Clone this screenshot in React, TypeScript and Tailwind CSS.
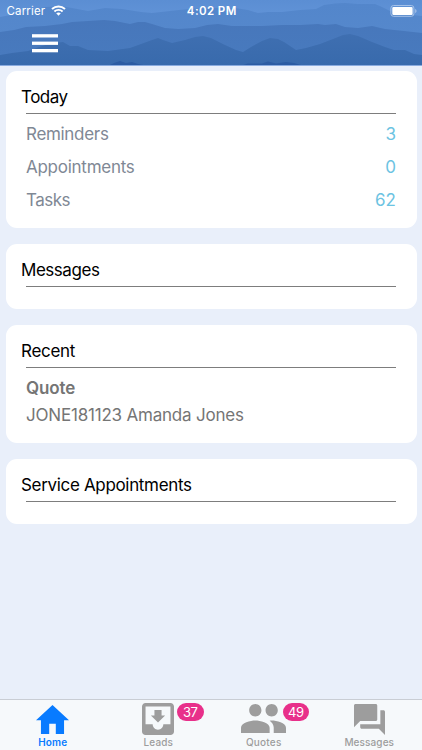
import React from 'react';

interface Tab {
  id: string;
  label: string;
  labelClass: string;
  iconClass: string;
  viewBox: string;
  path: string;
  badge?: number;
}

const todayRows = [
  { label: 'Reminders', count: 3, labelClass: 'tracking-[-0.31px]' },
  { label: 'Appointments', count: 0, labelClass: 'tracking-[-0.26px]' },
  { label: 'Tasks', count: 62, labelClass: 'tracking-[-0.5px]' },
];

const tabs: Tab[] = [
  {
    id: 'home',
    label: 'Home',
    labelClass: 'font-semibold tracking-[0.1px]',
    iconClass: 'mt-[5px] w-[33px] h-[29px]',
    viewBox: '2 3 20 17',
    path: 'M10 20v-6h4v6h5v-8h3L12 3 2 12h3v8z',
  },
  {
    id: 'leads',
    label: 'Leads',
    labelClass: 'font-medium tracking-[0.1px]',
    iconClass: 'mt-[3px] w-[32px] h-[32px]',
    viewBox: '3 3 18 18',
    path: 'M19 3H4.99c-1.11 0-1.98.9-1.98 2L3 19c0 1.1.88 2 1.99 2H19c1.1 0 2-.9 2-2V5c0-1.1-.9-2-2-2zm0 12h-4c0 1.66-1.35 3-3 3s-3-1.34-3-3H4.99V5H19v10zm-3-5h-2V7h-4v3H8l4 4 4-4z',
    badge: 37,
  },
  {
    id: 'quotes',
    label: 'Quotes',
    labelClass: 'font-medium tracking-[0.2px]',
    iconClass: 'mt-[4px] w-[45px] h-[29px]',
    viewBox: '1 5 22 14',
    path: 'M16 11c1.66 0 2.99-1.34 2.99-3S17.66 5 16 5c-1.66 0-3 1.34-3 3s1.34 3 3 3zm-8 0c1.66 0 2.99-1.34 2.99-3S9.66 5 8 5C6.34 5 5 6.34 5 8s1.34 3 3 3zm0 2c-2.33 0-7 1.17-7 3.5V19h14v-2.5c0-2.33-4.67-3.5-7-3.5zm8 0c-.29 0-.62.02-.97.05 1.16.84 1.97 1.97 1.97 3.45V19h6v-2.5c0-2.33-4.67-3.5-7-3.5z',
    badge: 49,
  },
  {
    id: 'messages',
    label: 'Messages',
    labelClass: 'font-medium tracking-[0.1px]',
    iconClass: 'mt-[4px] w-[31px] h-[31px]',
    viewBox: '2 2 20 20',
    path: 'M21 6h-2v9H6v2c0 .55.45 1 1 1h11l4 4V7c0-.55-.45-1-1-1zm-4 6V3c0-.55-.45-1-1-1H3c-.55 0-1 .45-1 1v14l4-4h10c.55 0 1-.45 1-1z',
  },
];

const Mountains: React.FC = () => (
  <svg className="absolute inset-0 w-full h-full" viewBox="0 0 422 66" preserveAspectRatio="none">
    <defs>
      <linearGradient id="sky" x1="0" y1="0" x2="0" y2="20" gradientUnits="userSpaceOnUse">
        <stop offset="0" stopColor="#5b8ed3" />
        <stop offset="1" stopColor="#6294d8" />
      </linearGradient>
      <linearGradient id="far" x1="0" y1="3" x2="0" y2="34" gradientUnits="userSpaceOnUse">
        <stop offset="0" stopColor="#5386cb" />
        <stop offset="1" stopColor="#5588cc" />
      </linearGradient>
      <linearGradient id="mid" x1="0" y1="20" x2="0" y2="56" gradientUnits="userSpaceOnUse">
        <stop offset="0" stopColor="#4777bb" />
        <stop offset="1" stopColor="#487abe" />
      </linearGradient>
      <linearGradient id="near" x1="0" y1="34" x2="0" y2="66" gradientUnits="userSpaceOnUse">
        <stop offset="0" stopColor="#3f6fb1" />
        <stop offset="1" stopColor="#386aac" />
      </linearGradient>
    </defs>
    <rect width="422" height="66" fill="url(#sky)" />
    <path
      d="M0 17L16 14 30 10 46 7 60 6 72 8 88 11 105 8 122 9 141 12 152 13 170 11 188 9 210 8 235 8 248 10 258 13 268 12 282 12 300 10 316 9 324 5 335 3.5 345 3 358 4 375 4 382 7 390 11 402 14 422 16V66H0z"
      fill="url(#far)"
    />
    <path
      d="M0 32L14 30 26 27 45 26 62 24 72 22 88 21 104 20 115 21 130 24 138 22 145 22 152 24 165 28 178 29 195 28 207 25 218 24 232 26 262 26 282 25 300 25 318 24 325 25 336 24 345 27 358 28 372 26 385 29 404 31 422 33V66H0z"
      fill="url(#mid)"
    />
    <path
      d="M0 55L12 53 28 51 42 46 54 43 63 42 70 46 78 46 88 50 108 51 130 48 141 44 152 40 158 38 163 40 172 43 185 40 195 37 203 36 211 38 225 45 236 50 243 52 251 47 262 41 270 38 278 39 284 42 290 46 296 50 306 48 320 44 333 39 343 35 350 34 358 36 372 42 385 47 394 50 405 50 414 54 422 55V66H0z"
      fill="url(#near)"
    />
    <path
      d="M108 66L114 63 120 61 126 63 132 62 138 64 148 66zM240 66L248 63.5 262 63.5 268 61.5 276 63.5 286 62 294 63 304 66z"
      fill="#2c5ca3"
    />
    <rect y="65" width="422" height="1" fill="#8aabdf" />
  </svg>
);

const StatusBar: React.FC = () => (
  <div className="relative flex items-center h-5 pt-[2px] text-[11.5px] leading-5 text-white">
    <div className="flex flex-1 items-center pl-[6.5px]">
      <span className="tracking-[0.15px]">Carrier</span>
      <svg className="ml-[6px] -mt-px w-[15px] h-[11px]" viewBox="0 0 15 11" fill="none">
        <path d="M1 4C4.7.5 10.3.5 14 4" stroke="#fff" strokeWidth="2" />
        <path d="M3.4 6.5c2.3-2.2 5.9-2.2 8.2 0" stroke="#fff" strokeWidth="1.9" />
        <path d="M5.2 8.3c1.3-1.2 3.3-1.2 4.6 0L7.5 10.7z" fill="#fff" />
      </svg>
    </div>
    <span className="font-semibold tracking-[0.4px]">4:02 PM</span>
    <div className="flex flex-1 justify-end pr-[5px]">
      <svg className="w-[27px] h-[12px] -mt-px" viewBox="0 0 27 12" fill="none">
        <rect x="0.9" y="0.5" width="23" height="10.8" rx="2.6" stroke="#a5c1e8" />
        <rect x="2.3" y="1.9" width="20.3" height="8" rx="1.2" fill="#fff" />
        <path d="M25.2 4v4c.8-.3 1.3-1.1 1.3-2s-.5-1.7-1.3-2z" fill="#a5c1e8" />
      </svg>
    </div>
  </div>
);

const Card: React.FC<{
  title: string;
  className: string;
  titleClass: string;
  children?: React.ReactNode;
}> = ({ title, className, titleClass, children }) => (
  <section className={`rounded-[11px] bg-white pt-[15px] px-[15.5px] ${className}`}>
    <h2 className={`text-[17px] leading-[22px] text-black ${titleClass}`}>{title}</h2>
    <div className="mx-[5px] mt-[5px] h-px bg-[#7d7d7d]" />
    <div className="px-[5px]">{children}</div>
  </section>
);

const TabBar: React.FC = () => (
  <nav className="grid grid-cols-4 h-[51px] border-t border-[#c9cdd4] bg-[#f6f9fb]">
    {tabs.map((tab) => {
      const isActive = tab.id === 'home';

      return (
        <button
          key={tab.id}
          className={`relative flex flex-col items-center ${isActive ? 'text-[#087bff]' : 'text-[#9d9d9d]'}`}
        >
          <span className="flex h-[36px] items-start">
            <svg className={tab.iconClass} viewBox={tab.viewBox} preserveAspectRatio="none" fill="currentColor">
              <path d={tab.path} />
            </svg>
          </span>
          <span className={`text-[10px] leading-3 ${tab.labelClass}`}>{tab.label}</span>
          {tab.badge && (
            <span className="absolute left-[71.5px] top-[3px] h-[18px] w-[26.5px] rounded-full bg-[#e8308a] text-center text-[13px] leading-[18px] tracking-[-0.4px] text-white">
              {tab.badge}
            </span>
          )}
        </button>
      );
    })}
  </nav>
);

export default function App() {
  return (
    <div className="flex flex-col w-[422px] h-[750px] overflow-hidden bg-[#e9effa] font-['Inter',sans-serif]">
      <header className="relative h-[66px] shrink-0">
        <Mountains />
        <StatusBar />
        <button className="relative ml-8 mt-[14px] block h-[19px] w-[26px]">
          <svg className="block h-full w-full" viewBox="0 0 26 19" fill="#fff">
            <rect y="0.2" width="26" height="3.3" />
            <rect y="7.6" width="26" height="3.3" />
            <rect y="15" width="26" height="3.3" />
          </svg>
        </button>
      </header>

      <main className="flex flex-1 flex-col gap-4 px-[5.5px] pt-[4.5px]">
        <Card title="Today" className="h-[157.5px]" titleClass="tracking-[-0.5px]">
          <ul className="pt-[5px]">
            {todayRows.map((row) => (
              <li key={row.label} className="flex h-[33px] items-center justify-between text-[17px]">
                <span className={`text-[#808895] ${row.labelClass}`}>{row.label}</span>
                <span className="text-[#6cc3e2]">{row.count}</span>
              </li>
            ))}
          </ul>
        </Card>
        <Card title="Messages" className="h-[64.5px]" titleClass="tracking-[-0.46px]" />
        <Card title="Recent" className="h-[118.5px]" titleClass="tracking-[-0.28px]">
          <div className="pt-[7px] text-[17px] leading-[27px] text-[#757575]">
            <p className="font-semibold tracking-[-0.1px]">Quote</p>
            <p className="tracking-[-0.2px]">JONE181123 Amanda Jones</p>
          </div>
        </Card>
        <Card title="Service Appointments" className="h-[64.5px]" titleClass="tracking-[-0.33px]" />
      </main>

      <TabBar />
    </div>
  );
}
